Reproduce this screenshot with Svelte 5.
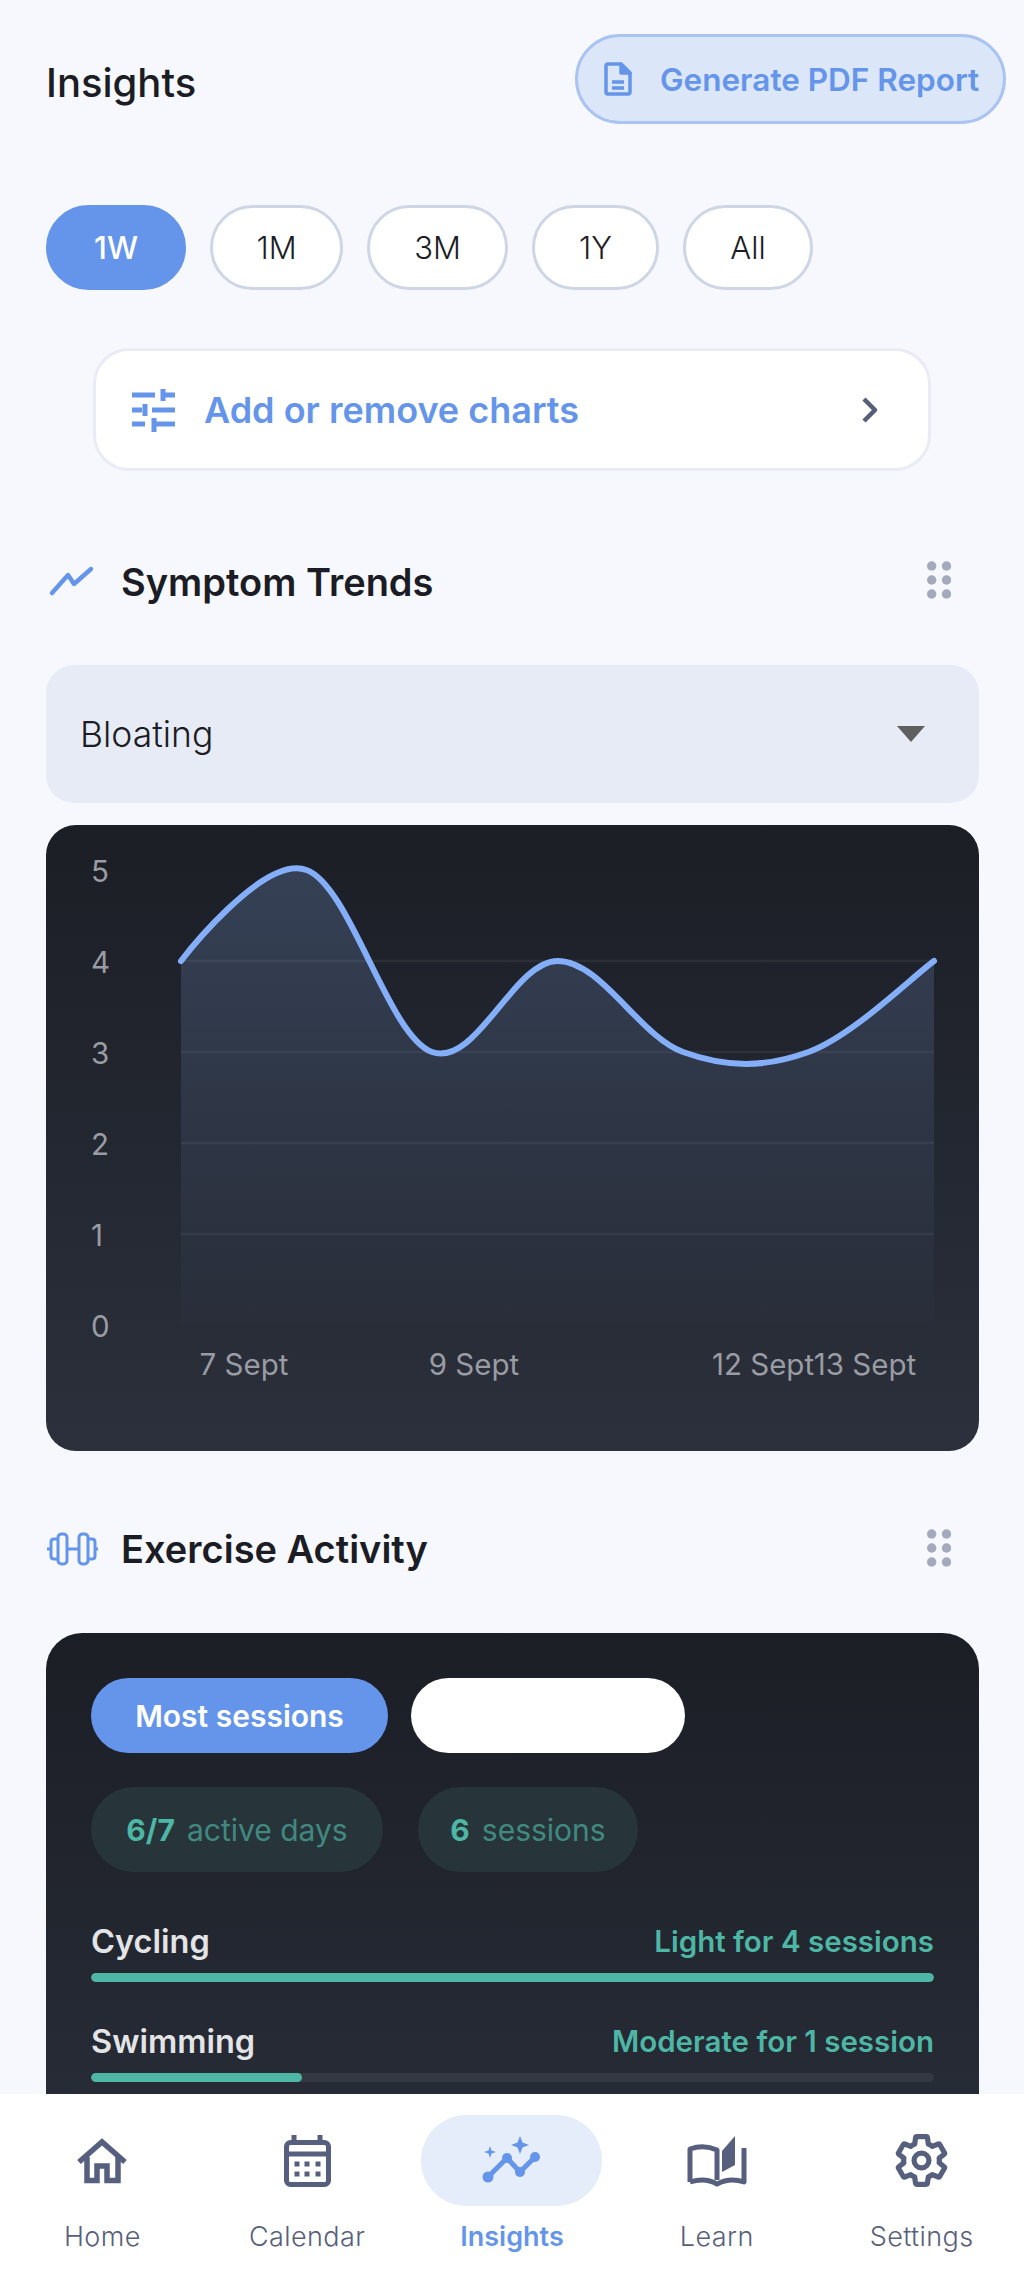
<script>
  const xs = [181, 306.5, 432, 557.5, 683, 808.5, 934];
  const vals = [4, 5, 3, 4, 3, 3, 4];
  const yOf = (v) => 1325 - v * 91;
  const pts = xs.map((x, i) => [x, yOf(vals[i])]);
  function curve() {
    let d = `M${pts[0][0]} ${pts[0][1]}`;
    let t = [0, 0];
    for (let i = 1; i < pts.length; i++) {
      const cur = pts[i], prev = pts[i - 1], next = pts[Math.min(i + 1, pts.length - 1)];
      const c1 = [prev[0] + t[0], prev[1] + t[1]];
      t = [((next[0] - prev[0]) / 2) * 0.35, ((next[1] - prev[1]) / 2) * 0.35];
      const c2 = [cur[0] - t[0], cur[1] - t[1]];
      d += ` C${c1[0]} ${c1[1]} ${c2[0]} ${c2[1]} ${cur[0]} ${cur[1]}`;
    }
    return d;
  }
  const line = curve();
  const area = `${line} L934 1325 L181 1325 Z`;
  const ranges = ['1W', '1M', '3M', '1Y', 'All'];
  const yLabels = [5, 4, 3, 2, 1, 0];
  const xLabels = [['7 Sept', 244], ['9 Sept', 474], ['12 Sept', 763], ['13 Sept', 865]];
  const dots = [566, 580, 594];
</script>

<div class="phone">
  <main class="content">
    <header class="top">
      <h1>Insights</h1>
      <button class="pdf">
        <svg width="30" height="36" viewBox="604 61 30 36" fill="none" stroke="#6495ea" stroke-width="3.5" stroke-linejoin="round">
          <path d="M609 64 H622 L631 73 V92 Q631 94 629 94 H609 Q607 94 607 92 V66 Q607 64 609 64 Z" />
          <path d="M622 64 L631 73 H622 Z" fill="#6495ea" />
          <path d="M613 82 H625 M613 88 H625" />
        </svg>
        <span>Generate PDF Report</span>
      </button>
    </header>

    <div class="ranges">
      {#each ranges as r, i}
        <button class="range" class:on={i === 0}>{r}</button>
      {/each}
    </div>

    <button class="manage">
      <svg width="46" height="44" viewBox="131 387 46 44" fill="none" stroke="#6495ea" stroke-width="5">
        <path d="M132 394 H155 M163 388 V400 M163 394 H175 M132 409 H142 M145 403 V415 M152 409 H175 M132 423 H145 M154 417 V431 M154 423 H175" />
      </svg>
      <span>Add or remove charts</span>
      <svg class="chev" width="20" height="28" viewBox="0 0 20 28" fill="none" stroke="#565e78" stroke-width="4.5" stroke-linejoin="round">
        <path d="M4 3 L15 14 L4 25" />
      </svg>
    </button>

    <section class="head first">
      <svg class="hicon" width="50" height="34" viewBox="46 563 50 34" fill="none" stroke="#6495ea" stroke-width="4.4" stroke-linejoin="round" stroke-linecap="round">
        <path d="M52 592 L68 574 L74 583 L91 568" />
      </svg>
      <h2>Symptom Trends</h2>
      <svg class="grip" width="24" height="40" viewBox="927 561 24 40" fill="#a4a9bb">
        {#each dots as y}
          <circle cx="931.7" cy={y} r="4.7" /><circle cx="946.5" cy={y} r="4.7" />
        {/each}
      </svg>
    </section>

    <div class="select">
      <span>Bloating</span>
      <i class="tri"></i>
    </div>

    <div class="chart">
      <svg width="933" height="626" viewBox="46 825 933 626">
        <defs>
          <linearGradient id="fill" x1="0" y1="870" x2="0" y2="1325" gradientUnits="userSpaceOnUse">
            <stop offset="0" stop-color="#8fb6fb" stop-opacity="0.22" />
            <stop offset="1" stop-color="#8fb6fb" stop-opacity="0.01" />
          </linearGradient>
        </defs>
        {#each [961, 1052, 1143, 1234] as y}
          <line x1="181" x2="934" y1={y} y2={y} stroke="#ffffff" stroke-opacity="0.055" stroke-width="2.5" />
        {/each}
        <path d={area} fill="url(#fill)" />
        <path d={line} fill="none" stroke="#84aff8" stroke-width="6" stroke-linecap="round" />
        {#each yLabels as v}
          <text class="tick" x="91" y={1325 - v * 91 + 12}>{v}</text>
        {/each}
        {#each xLabels as [label, x]}
          <text class="tick" {x} y="1375" text-anchor="middle">{label}</text>
        {/each}
      </svg>
    </div>

    <section class="head second">
      <svg class="hicon" width="52" height="34" viewBox="45 1531 52 34" fill="none" stroke="#6495ea" stroke-width="3">
        <rect x="57" y="1533" width="9" height="30" rx="3.5" />
        <rect x="78" y="1533" width="9" height="30" rx="3.5" />
        <path d="M57 1538 H53 Q50 1538 50 1541 V1555 Q50 1558 53 1558 H57 M87 1538 H91 Q94 1538 94 1541 V1555 Q94 1558 91 1558 H87 M66 1548 H78 M46 1548 H50 M94 1548 H97" />
      </svg>
      <h2>Exercise Activity</h2>
      <svg class="grip" width="24" height="40" viewBox="927 561 24 40" fill="#a4a9bb">
        {#each dots as y}
          <circle cx="931.7" cy={y} r="4.7" /><circle cx="946.5" cy={y} r="4.7" />
        {/each}
      </svg>
    </section>

    <div class="activity">
      <div class="tabs">
        <button class="tab">Most sessions</button>
        <button class="tab blank" aria-label="Other view"></button>
      </div>
      <div class="stats">
        <div class="stat wide"><b>6/7</b> <span>active days</span></div>
        <div class="stat"><b>6</b> <span>sessions</span></div>
      </div>
      <div class="row">
        <div class="labels"><span class="name">Cycling</span><span class="note">Light for 4 sessions</span></div>
        <div class="track"><div class="bar" style="width: 100%"></div></div>
      </div>
      <div class="row">
        <div class="labels"><span class="name">Swimming</span><span class="note">Moderate for 1 session</span></div>
        <div class="track"><div class="bar" style="width: 25%"></div></div>
      </div>
    </div>
  </main>

  <nav class="nav">
    <div class="item">
      <div class="slot">
        <svg width="56" height="52" viewBox="74 2134 56 52" fill="none" stroke="#565f7e" stroke-width="5.5" stroke-linejoin="miter">
          <path d="M79 2161 L102 2141 L125 2161" />
          <path d="M87 2156 V2179.5 H97 V2165 H107 V2179.5 H118 V2156" />
        </svg>
      </div>
      <span>Home</span>
    </div>
    <div class="item">
      <div class="slot">
        <svg width="52" height="56" viewBox="281 2133 52 56" fill="none" stroke="#565f7e">
          <rect x="286.5" y="2142.5" width="42" height="42" rx="4" stroke-width="5" />
          <path d="M286 2154 H329" stroke-width="5" />
          <path d="M294 2135 V2141 M320 2135 V2141" stroke-width="5" />
          <g fill="#565f7e" stroke="none">
            {#each [297, 307, 318] as x}
              <rect x={x - 2.5} y="2161.5" width="5" height="5" />
              <rect x={x - 2.5} y="2171.5" width="5" height="5" />
            {/each}
          </g>
        </svg>
      </div>
      <span>Calendar</span>
    </div>
    <div class="item active">
      <div class="slot pillbg">
        <svg width="64" height="54" viewBox="480 2134 64 54" fill="#6495ea">
          <path d="M488 2177 L507 2158 L520 2172 L535 2157" fill="none" stroke="#6495ea" stroke-width="5" stroke-linejoin="round" />
          <circle cx="488" cy="2177" r="5.5" />
          <circle cx="507" cy="2158" r="5" />
          <circle cx="520" cy="2172" r="5" />
          <circle cx="535" cy="2157" r="5" />
          <path d="M490 2146 L491.5 2150.5 L496 2152 L491.5 2153.5 L490 2158 L488.5 2153.5 L484 2152 L488.5 2150.5 Z" />
          <path d="M520 2136 L522.5 2142.5 L529 2145 L522.5 2147.5 L520 2154 L517.5 2147.5 L511 2145 L517.5 2142.5 Z" />
        </svg>
      </div>
      <span>Insights</span>
    </div>
    <div class="item">
      <div class="slot">
        <svg width="62" height="54" viewBox="686 2130 62 54" fill="none" stroke="#565f7e" stroke-width="5" stroke-linejoin="round">
          <path d="M690 2178 V2145 Q704 2140 717 2146 V2176" />
          <path d="M690 2178 Q705 2173 717 2180 Q730 2173 744 2178 V2144" />
          <path d="M722 2168 V2147 L735 2132 V2161 Z" fill="#565f7e" stroke="none" />
        </svg>
      </div>
      <span>Learn</span>
    </div>
    <div class="item">
      <div class="slot">
        <svg width="53" height="53" viewBox="1.3 1.3 21.4 21.4" fill="none" stroke="#565f7e" stroke-width="2.1" stroke-linejoin="round">
          <path d="M19.14 12.94c.04-.3.06-.61.06-.94 0-.32-.02-.64-.07-.94l2.03-1.58c.18-.14.23-.41.12-.61l-1.92-3.32c-.12-.22-.37-.29-.59-.22l-2.39.96c-.5-.38-1.03-.7-1.62-.94L14.4 2.81c-.04-.24-.24-.41-.48-.41h-3.84c-.24 0-.43.17-.47.41L9.25 5.35C8.66 5.59 8.12 5.92 7.63 6.29L5.24 5.33c-.22-.08-.47 0-.59.22L2.74 8.87c-.12.21-.08.47.12.61l2.03 1.58C4.84 11.36 4.8 11.69 4.8 12s.02.64.07.94l-2.03 1.58c-.18.14-.23.41-.12.61l1.92 3.32c.12.22.37.29.59.22l2.39-.96c.5.38 1.03.7 1.62.94l.36 2.54c.05.24.24.41.48.41h3.84c.24 0 .44-.17.47-.41l.36-2.54c.59-.24 1.13-.56 1.62-.94l2.39.96c.22.08.47 0 .59-.22l1.92-3.32c.12-.22.07-.47-.12-.61l-2.01-1.58z" />
          <circle cx="12" cy="12" r="3" />
        </svg>
      </div>
      <span>Settings</span>
    </div>
  </nav>
</div>

<style>
  :global(body) {
    background: #f6f8fe;
  }
  .phone {
    width: 1024px;
    height: 2276px;
    display: flex;
    flex-direction: column;
    overflow: hidden;
    background: #f6f8fe;
    font-family: Inter, "Liberation Sans", sans-serif;
    color: #1c1d24;
  }
  .content {
    flex: 1;
    min-height: 0;
    overflow: hidden;
    padding: 34px 18px 0 46px;
    box-sizing: border-box;
  }
  button {
    font-family: inherit;
    margin: 0;
    box-sizing: border-box;
  }
  .top {
    display: flex;
    justify-content: space-between;
    align-items: center;
    height: 90px;
    margin-bottom: 81px;
  }
  h1 {
    margin: 0;
    font-size: 40px;
    font-weight: 500;
    padding-top: 6px;
  }
  .pdf {
    width: 431px;
    height: 90px;
    border-radius: 45px;
    border: 3px solid #a9c3f2;
    background: #dbe6f9;
    color: #6495ea;
    display: flex;
    align-items: center;
    gap: 27px;
    padding: 0 0 0 25px;
    font-size: 31.5px;
    font-weight: 600;
    white-space: nowrap;
  }
  .ranges {
    display: flex;
    gap: 24px;
    height: 85px;
  }
  .range {
    height: 85px;
    width: 133px;
    border-radius: 43px;
    border: 3px solid #ced6e6;
    background: #fff;
    font-size: 31px;
    font-weight: 350;
    color: #1c1d24;
    padding: 0;
  }
  .range:nth-child(1) { width: 140px; }
  .range:nth-child(3) { width: 141px; }
  .range:nth-child(4) { width: 127px; }
  .range:nth-child(5) { width: 130px; }
  .range.on {
    background: #6495ea;
    border-color: #6495ea;
    color: #fff;
    font-weight: 500;
  }
  .manage {
    display: flex;
    align-items: center;
    width: 838px;
    height: 123px;
    margin: 58px 0 0 47px;
    padding: 0 48px 0 35px;
    border-radius: 36px;
    border: 3px solid #e9ecf4;
    background: #fff;
    color: #6495ea;
    font-size: 36px;
    font-weight: 600;
    text-align: left;
  }
  .manage span {
    margin-left: 27px;
    flex: 1;
  }
  .head {
    display: flex;
    align-items: center;
    width: 933px;
    height: 40px;
  }
  .head.first { margin-top: 90px; }
  .head.second { margin-top: 78px; }
  .hicon { flex: none; }
  .head h2 {
    margin: 0 0 0 25px;
    font-size: 38px;
    font-weight: 600;
    flex: 1;
  }
  .second h2 { margin-left: 23px; }
  .first h2 { margin-top: 2px; }
  .grip {
    flex: none;
    margin-right: 28px;
  }
  .select {
    width: 933px;
    height: 138px;
    margin-top: 64px;
    box-sizing: border-box;
    padding: 0 54px 0 34px;
    border-radius: 28px;
    background: #e7ebf5;
    display: flex;
    align-items: center;
    justify-content: space-between;
    font-size: 35.5px;
    font-weight: 350;
  }
  .tri {
    width: 0;
    height: 0;
    border-left: 14px solid transparent;
    border-right: 14px solid transparent;
    border-top: 16px solid #5f5f5f;
  }
  .chart {
    width: 933px;
    height: 626px;
    margin-top: 22px;
    border-radius: 30px;
    overflow: hidden;
    background: linear-gradient(180deg, #1b1e25 0%, #2b303c 100%);
  }
  .chart svg {
    display: block;
  }
  .tick {
    font-family: Inter, "Liberation Sans", sans-serif;
    font-size: 29.5px;
    fill: #9a9ca3;
  }
  .activity {
    width: 933px;
    height: 640px;
    margin-top: 64px;
    box-sizing: border-box;
    padding: 45px 45px 0;
    border-radius: 36px 36px 0 0;
    background: linear-gradient(180deg, #1b1e25 0%, #2b303c 100%);
  }
  .tabs {
    display: flex;
    gap: 23px;
  }
  .tab {
    width: 297px;
    height: 75px;
    border: 0;
    border-radius: 38px;
    background: #6495ea;
    color: #fff;
    font-size: 30px;
    font-weight: 600;
    padding: 0;
  }
  .tab.blank {
    width: 274px;
    background: #fff;
  }
  .stats {
    display: flex;
    gap: 35px;
    margin-top: 34px;
  }
  .stat {
    width: 220px;
    height: 85px;
    border-radius: 43px;
    background: #27353b;
    display: flex;
    align-items: center;
    justify-content: center;
    gap: 12px;
    font-size: 30px;
    color: #41897f;
  }
  .stat.wide { width: 292px; }
  .stat b {
    color: #4db6a5;
    font-weight: 700;
  }
  .row {
    margin-top: 50px;
  }
  .row + .row {
    margin-top: 39px;
  }
  .stats + .row {
    margin-top: 49px;
  }
  .labels {
    display: flex;
    justify-content: space-between;
    align-items: center;
    height: 40px;
  }
  .name {
    color: #e3e4e6;
    font-size: 32.5px;
    font-weight: 600;
  }
  .note {
    color: #4db6a5;
    font-size: 29.5px;
    font-weight: 600;
  }
  .track {
    margin-top: 12px;
    height: 9px;
    border-radius: 5px;
    background: #343843;
    overflow: hidden;
  }
  .bar {
    height: 100%;
    border-radius: 5px;
    background: #4db6a5;
  }
  .nav {
    flex: none;
    height: 182px;
    background: #fff;
    display: grid;
    grid-template-columns: repeat(5, 1fr);
    position: relative;
  }
  .item {
    display: flex;
    flex-direction: column;
    align-items: center;
    color: #585f7c;
    font-size: 27px;
    font-weight: 350;
    letter-spacing: 0.4px;
  }
  .item.active {
    color: #6495ea;
    font-weight: 600;
    letter-spacing: 0;
  }
  .slot {
    margin-top: 21px;
    width: 181px;
    height: 91px;
    border-radius: 46px;
    display: flex;
    align-items: center;
    justify-content: center;
  }
  .pillbg {
    background: #e5edfb;
  }
  .item span {
    margin-top: 15px;
    line-height: 32px;
  }
</style>
